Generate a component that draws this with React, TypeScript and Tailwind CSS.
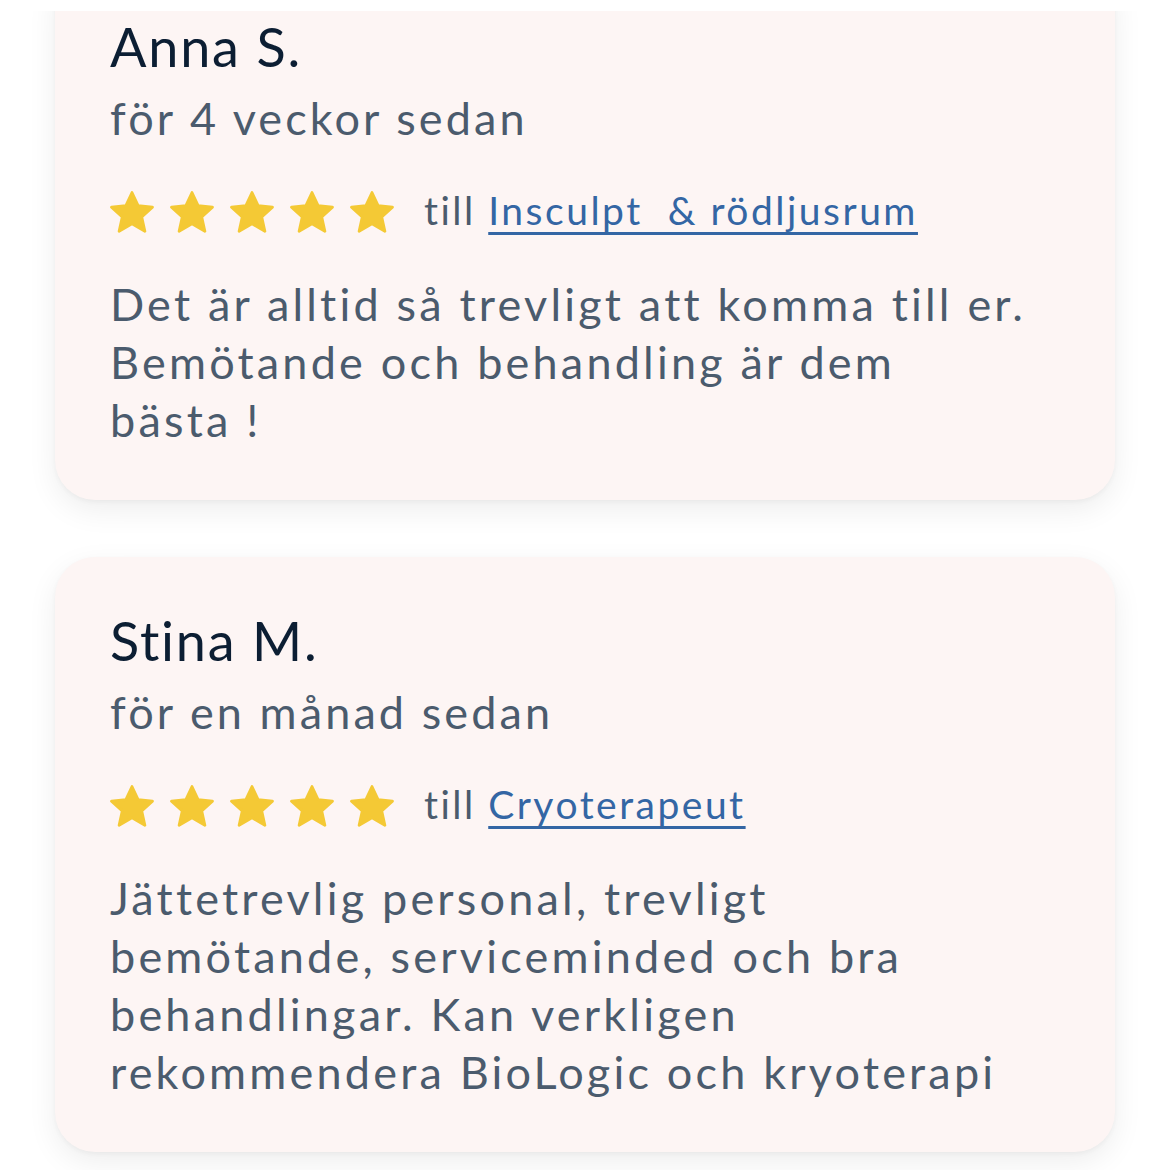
import { Fragment } from "react";

type Review = {
  name: string;
  when: string;
  service: string;
  text: string;
};

const reviews: Review[] = [
  {
    name: "Anna S.",
    when: "för 4 veckor sedan",
    service: "Insculpt\u00a0 & rödljusrum",
    text: "Det är alltid så trevligt att komma till er. Bemötande och behandling är dem bästa\u00a0!",
  },
  {
    name: "Stina M.",
    when: "för en månad sedan",
    service: "Cryoterapeut",
    text: "Jättetrevlig personal, trevligt bemötande, serviceminded och bra behandlingar. Kan verkligen rekommendera BioLogic och kryoterapi",
  },
];

function Star() {
  return (
    <svg width="44" height="44" viewBox="1.6 1.4 20.8 20.4" className="shrink-0">
      <path
        d="M12 2.4l2.9 6.2 6.8.7-5.1 4.6 1.5 6.8L12 17.2l-6.1 3.5 1.5-6.8-5.1-4.6 6.8-.7z"
        fill="#f4c935"
        stroke="#f4c935"
        strokeWidth="1.3"
        strokeLinejoin="round"
      />
    </svg>
  );
}

function ReviewCard({ review, first }: { review: Review; first?: boolean }) {
  return (
    <div
      className={
        "rounded-[40px] bg-[#fdf5f4] pl-[55px] pr-[75px] pt-[52px] pb-[51px] shadow-[0_10px_30px_rgba(0,0,0,0.07),0_2px_5px_rgba(0,0,0,0.04)] " +
        (first ? "-mt-[48px]" : "mt-[57px]")
      }
    >
      <div className="text-[54px] leading-[64px] text-[#0c1e33] tracking-[1.8px]">
        {review.name}
      </div>
      <div className="mt-[10px] text-[45px] leading-[58px] text-[#4b5b6d] tracking-[3.1px]">
        {review.when}
      </div>
      <div className="mt-[40px] flex h-[50px] items-center">
        <div className="flex gap-[16px]">
          {[0, 1, 2, 3, 4].map((i) => (
            <Fragment key={i}>
              <Star />
            </Fragment>
          ))}
        </div>
        <div className="ml-[30px] -mt-[4px] text-[39px] leading-[50px] text-[#4b5b6d] tracking-[2.5px]">
          till{" "}
          <a
            href="#"
            className="text-[#3466a4] underline decoration-[3px] underline-offset-[7px] whitespace-pre"
          >
            {review.service}
          </a>
        </div>
      </div>
      <p className="mt-[38px] text-[45px] leading-[58px] text-[#4b5b6d] tracking-[3.2px]">
        {review.text}
      </p>
    </div>
  );
}

export default function App() {
  return (
    <div
      className="min-h-[1170px] bg-white pt-[11px]"
      style={{ fontFamily: "Lato, 'Noto Sans', sans-serif" }}
    >
      <div className="h-[1159px] overflow-hidden px-[55px]">
        {reviews.map((r, i) => (
          <ReviewCard key={r.name} review={r} first={i === 0} />
        ))}
      </div>
    </div>
  );
}
